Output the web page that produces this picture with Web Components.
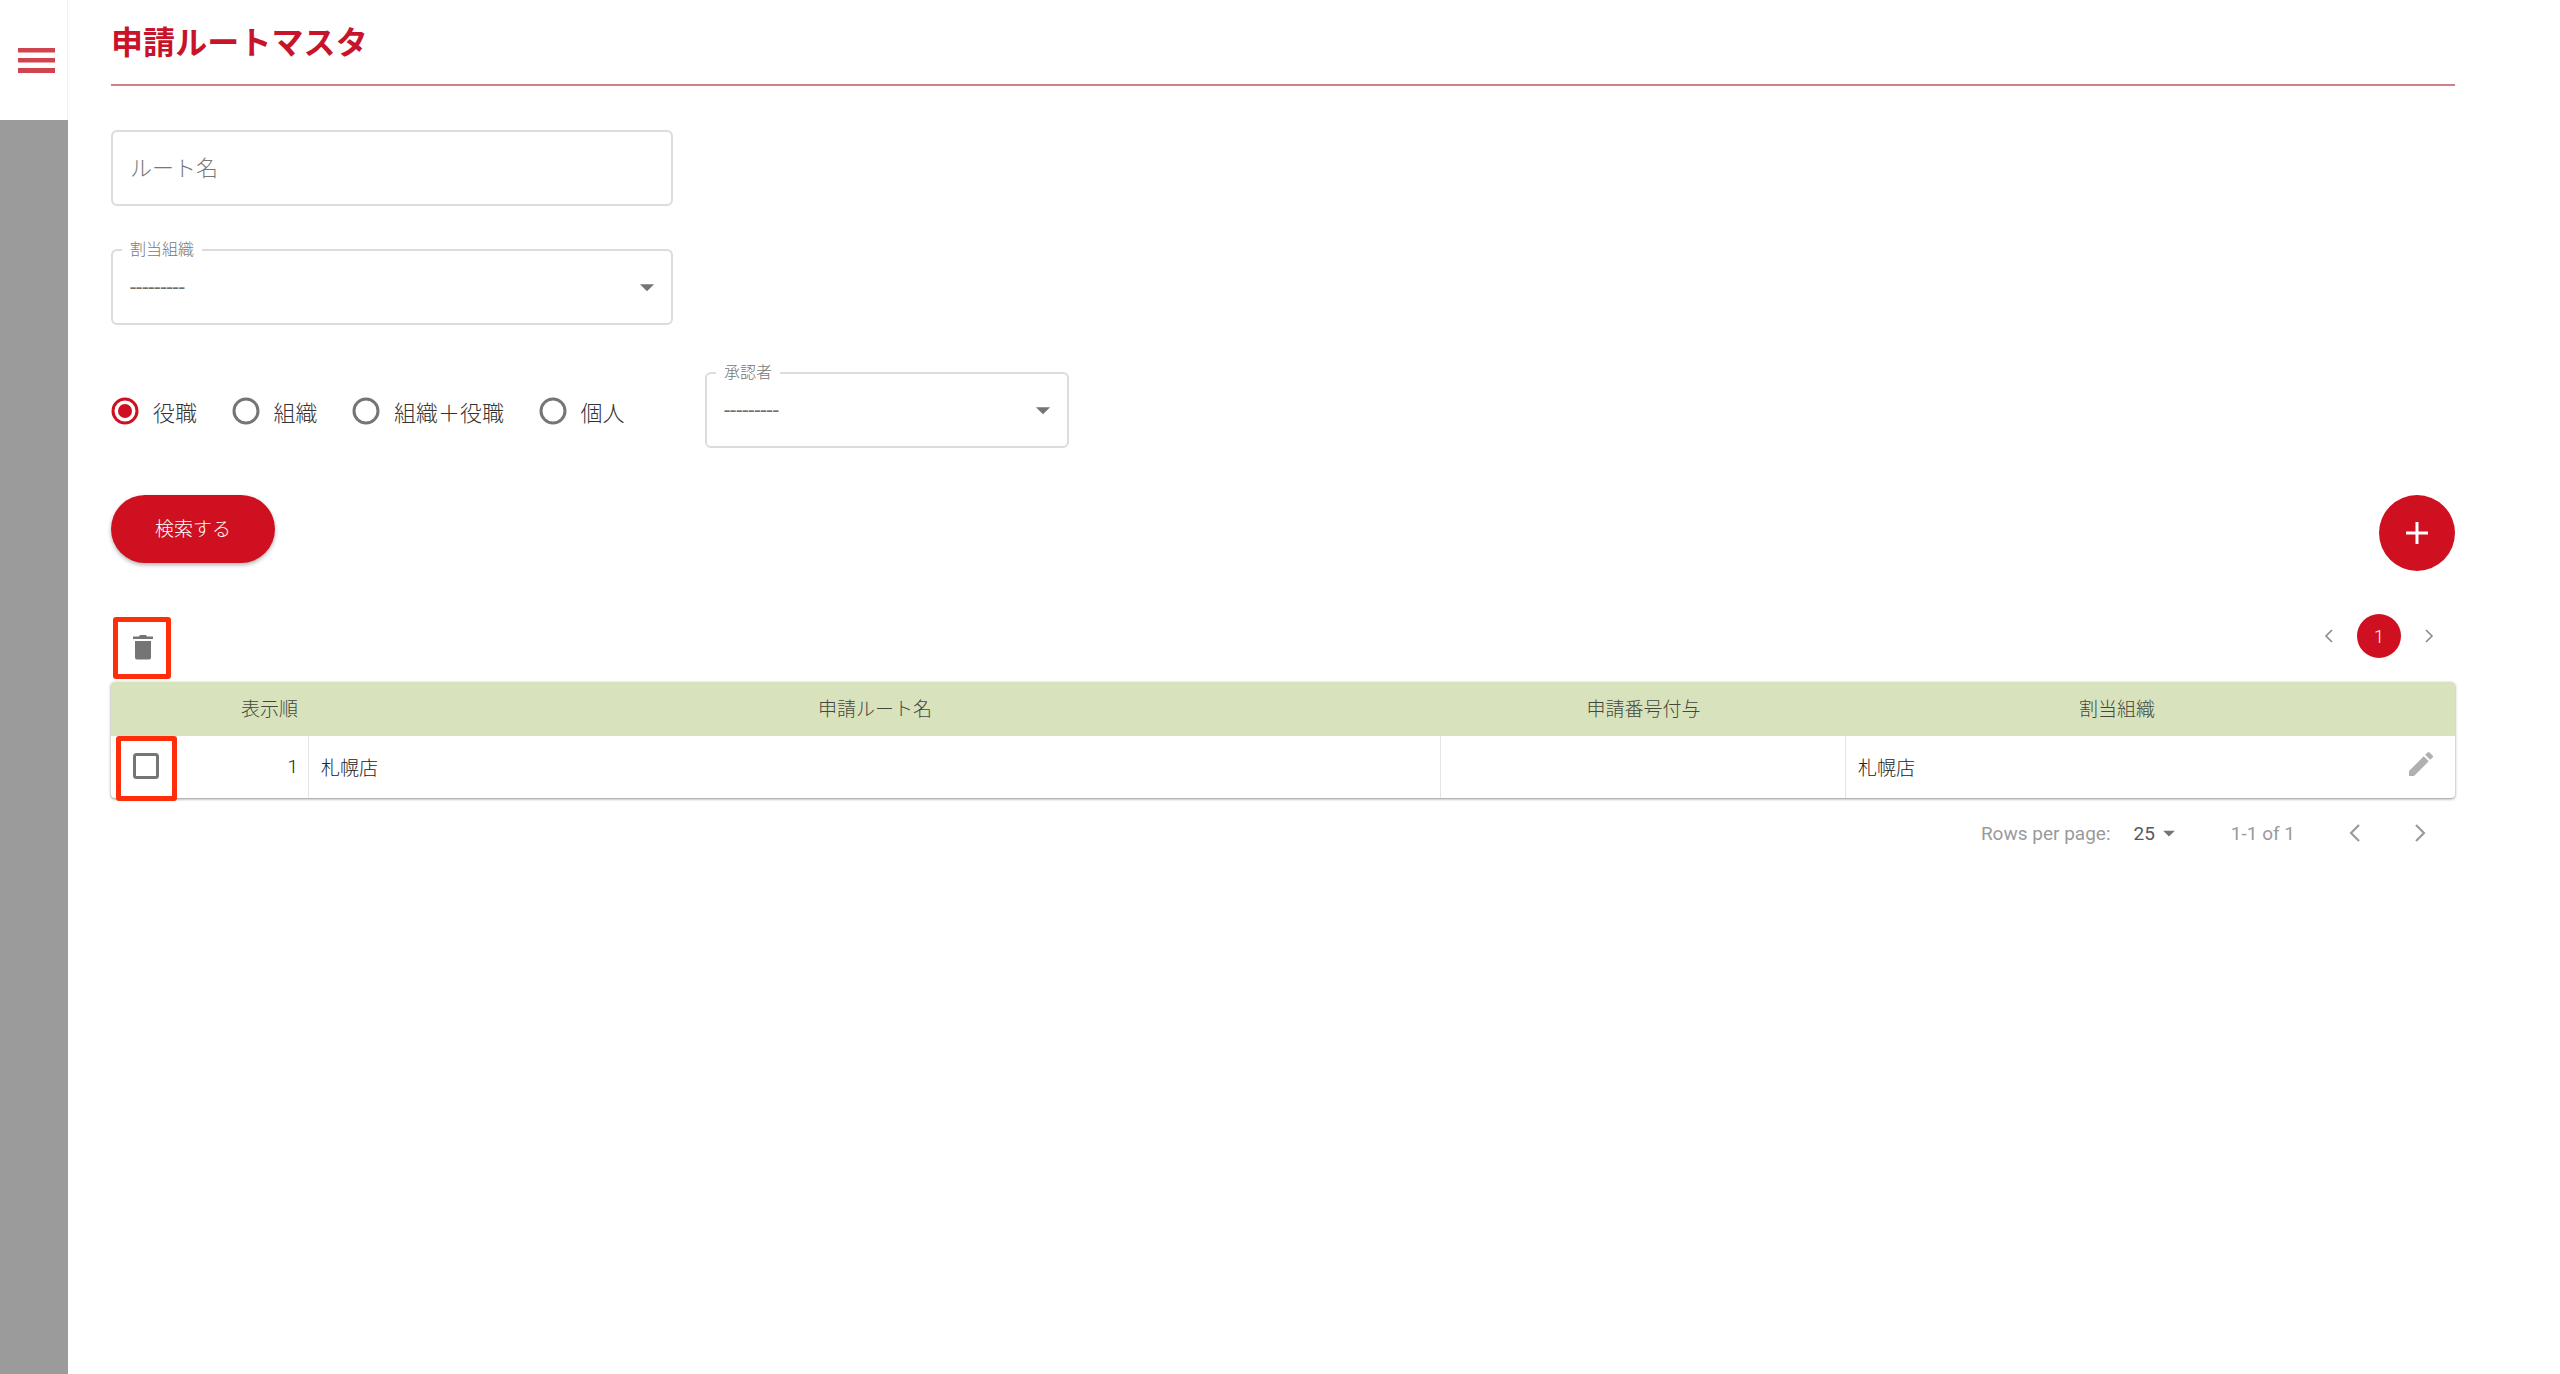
<!DOCTYPE html>
<html lang="ja">
<head>
<meta charset="utf-8">
<title>申請ルートマスタ</title>
<style>
  html, body { margin: 0; height: 100%; background: #fff; }
  body { font-family: Roboto, "Noto Sans CJK JP", sans-serif; }
</style>
</head>
<body>
<route-app></route-app>
<script>
const ARROW = `<svg width="34" height="34" viewBox="0 0 24 24" fill="#757575"><path d="M7 10l5 5 5-5z"/></svg>`;
const PREV = `<svg width="24" height="24" viewBox="0 0 24 24" fill="none" stroke="currentColor" stroke-width="1.6"><path d="M15 6l-6 6 6 6"/></svg>`;
const NEXT = `<svg width="24" height="24" viewBox="0 0 24 24" fill="none" stroke="currentColor" stroke-width="1.6"><path d="M9 6l6 6-6 6"/></svg>`;

class SideBar extends HTMLElement {
    constructor() {
        super();
        this.attachShadow({ mode: 'open' });
        this.shadowRoot.innerHTML = `
            <style>
                :host { display: flex; flex-direction: column; width: 68px; flex: none; background: #9b9b9b; }
                .top { height: 120px; background: #fff; border-right: 1px solid #f0f0f0; box-sizing: border-box; padding: 48px 0 0 18px; }
                svg { display: block; }
            </style>
            <div class="top">
                <svg width="37" height="25" viewBox="0 0 37 25" fill="#d0434f">
                    <rect x="0" y="0" width="37" height="4.5"/>
                    <rect x="0" y="10" width="37" height="4.5"/>
                    <rect x="0" y="20" width="37" height="5"/>
                </svg>
            </div>
        `;
    }
}

class PageTitle extends HTMLElement {
    constructor() {
        super();
        this.attachShadow({ mode: 'open' });
        this.shadowRoot.innerHTML = `
            <style>
                :host { display: block; height: 86px; box-sizing: border-box; border-bottom: 2px solid #cf8088; color: #c8142a; font-size: 32px; font-weight: 700; line-height: 44px; padding-top: 21px; letter-spacing: .1px; }
            </style>
            <slot></slot>
        `;
    }
}

class TextField extends HTMLElement {
    constructor() {
        super();
        this.attachShadow({ mode: 'open' });
        this.shadowRoot.innerHTML = `
            <style>
                :host { display: flex; align-items: center; box-sizing: border-box; width: 562px; height: 76px; border: 2px solid #dcdcdc; border-radius: 6px; padding: 0 17px 4px; color: #777; font-size: 22px; font-weight: 300; background: #fff; }
            </style>
            <slot></slot>
        `;
    }
}

class SelectField extends HTMLElement {
    constructor() {
        super();
        this.attachShadow({ mode: 'open' });
        const label = this.getAttribute('label');
        this.shadowRoot.innerHTML = `
            <style>
                :host { display: flex; position: relative; align-items: center; justify-content: space-between; box-sizing: border-box; width: var(--w, 562px); height: 76px; border: 2px solid #dcdcdc; border-radius: 6px; padding: 0 7px 0 17px; color: #6f6f6f; font-size: 22px; background: #fff; }
                .label { position: absolute; left: 9px; top: -12px; padding: 0 8px; height: 22px; line-height: 22px; background: #fff; font-size: 16px; font-weight: 300; color: #777; }
                svg { display: block; }
            </style>
            <span class="label">${label}</span>
            <span><slot></slot></span>
            ${ARROW}
        `;
    }
}

class RadioOption extends HTMLElement {
    constructor() {
        super();
        this.attachShadow({ mode: 'open' });
        const on = this.hasAttribute('checked');
        this.shadowRoot.innerHTML = `
            <style>
                :host { display: inline-flex; align-items: center; gap: 14px; font-size: 22px; font-weight: 300; color: #333; }
                svg { display: block; }
            </style>
            <svg width="28" height="28" viewBox="0 0 28 28">
                <circle cx="14" cy="14" r="12" fill="none" stroke="${on ? '#cf1020' : '#757575'}" stroke-width="3"/>
                ${on ? '<circle cx="14" cy="14" r="7" fill="#cf1020"/>' : ''}
            </svg>
            <span><slot></slot></span>
        `;
    }
}

class PillButton extends HTMLElement {
    constructor() {
        super();
        this.attachShadow({ mode: 'open' });
        this.shadowRoot.innerHTML = `
            <style>
                :host { display: inline-flex; align-items: center; justify-content: center; box-sizing: border-box; width: 164px; height: 68px; padding-bottom: 4px; border-radius: 34px; background: #cf1020; color: #fff; font-size: 19px; font-weight: 300; box-shadow: 0 2px 4px rgba(0,0,0,.3); }
            </style>
            <slot></slot>
        `;
    }
}

class AddFab extends HTMLElement {
    constructor() {
        super();
        this.attachShadow({ mode: 'open' });
        this.shadowRoot.innerHTML = `
            <style>
                :host { display: flex; align-items: center; justify-content: center; width: 76px; height: 76px; border-radius: 50%; background: #cf1020; }
                svg { display: block; }
            </style>
            <svg width="22" height="22" viewBox="0 0 22 22" fill="#fff">
                <rect x="9.5" y="0" width="3" height="22"/>
                <rect x="0" y="9.5" width="22" height="3"/>
            </svg>
        `;
    }
}

class TopPager extends HTMLElement {
    constructor() {
        super();
        this.attachShadow({ mode: 'open' });
        this.shadowRoot.innerHTML = `
            <style>
                :host { display: flex; align-items: center; gap: 16px; color: #8a8a8a; margin-right: 14px; }
                .page { width: 44px; height: 44px; border-radius: 50%; background: #cf1020; color: #fff; font-size: 18px; font-weight: 300; display: flex; align-items: center; justify-content: center; }
                svg { display: block; }
            </style>
            ${PREV}
            <div class="page">1</div>
            ${NEXT}
        `;
    }
}

class RouteTable extends HTMLElement {
    constructor() {
        super();
        this.attachShadow({ mode: 'open' });
        this.shadowRoot.innerHTML = `
            <style>
                :host { display: block; position: relative; font-size: 19px; font-weight: 300; color: #222; border-radius: 4px; box-shadow: 0 1px 3px rgba(0,0,0,.45); background: #fff; }
                .row { display: grid; grid-template-columns: 198px 1132px 405px 1fr; }
                .head { height: 54px; background: #d8e3bd; border-radius: 4px 4px 0 0; color: #44473c; }
                .head .cell { padding-bottom: 3px; }
                .body { height: 62px; }
                .body .cell { padding-bottom: 2px; }
                .cell { display: flex; align-items: center; box-sizing: border-box; padding: 0 12px; position: relative; }
                .center { justify-content: center; }
                .right { justify-content: flex-end; }
                .head .right { padding-right: 11px; }
                .head .org { padding-right: 79px; }
                .body .cell { border-right: 1px solid #e4e4e4; }
                .body .cell:last-child { border-right: 0; }
                .first { justify-content: space-between; padding-left: 22px; padding-right: 10px; }
                .edit { position: absolute; right: 18px; top: 12px; display: block; }
                .first svg { display: block; }
                .mark { position: absolute; box-sizing: border-box; border: 5px solid #ff2d0a; border-radius: 3px; left: 5px; top: 0; width: 61px; height: 65px; }
            </style>
            <div class="row head">
                <div class="cell right">表示順</div>
                <div class="cell center">申請ルート名</div>
                <div class="cell center">申請番号付与</div>
                <div class="cell center org">割当組織</div>
            </div>
            <div class="row body">
                <div class="cell first">
                    <svg width="26" height="26" viewBox="0 0 26 26"><rect x="1.5" y="1.5" width="23" height="23" rx="2" fill="none" stroke="#757575" stroke-width="3"/></svg>
                    <span>1</span>
                    <div class="mark"></div>
                </div>
                <div class="cell">札幌店</div>
                <div class="cell"></div>
                <div class="cell">札幌店
                    <svg class="edit" width="32" height="32" viewBox="0 0 24 24" fill="#b0b0b0"><path d="M3 17.25V21h3.75L17.81 9.94l-3.75-3.75L3 17.25zM20.71 7.04a1 1 0 0 0 0-1.41l-2.34-2.34a1 1 0 0 0-1.41 0l-1.83 1.83 3.75 3.75 1.83-1.83z"/></svg>
                </div>
            </div>
        `;
    }
}

class TableFooter extends HTMLElement {
    constructor() {
        super();
        this.attachShadow({ mode: 'open' });
        this.shadowRoot.innerHTML = `
            <style>
                :host { display: flex; align-items: center; justify-content: flex-end; height: 70px; font-size: 19px; color: #9a9a9a; padding-right: 19px; }
                .rows { margin-right: 23px; }
                .size { display: flex; align-items: center; color: #55585c; margin-right: 48px; }
                .size svg { width: 28px; height: 28px; }
                .count { margin-right: 44px; }
                .nav { display: flex; gap: 33px; color: #9a9a9a; }
                .nav svg { display: block; width: 32px; height: 32px; }
            </style>
            <span class="rows">Rows per page:</span>
            <span class="size">25${ARROW}</span>
            <span class="count">1-1 of 1</span>
            <div class="nav">${PREV}${NEXT}</div>
        `;
    }
}

class RouteApp extends HTMLElement {
    constructor() {
        super();
        this.attachShadow({ mode: 'open' });
        this.shadowRoot.innerHTML = `
            <style>
                :host { display: flex; height: 1374px; overflow: hidden; font-family: Roboto, "Noto Sans CJK JP", sans-serif; }
                main { flex: 1; padding: 0 105px 0 43px; min-width: 0; }
                text-field { margin-top: 44px; }
                select-field.org { margin-top: 43px; }
                .filters { display: flex; align-items: center; margin-top: 47px; height: 76px; }
                .radios { display: flex; gap: 34.5px; width: 594px; padding-top: 1px; }
                .actions { display: flex; justify-content: space-between; align-items: flex-start; margin-top: 47px; }
                .tools { display: flex; justify-content: space-between; margin-top: 46px; height: 65px; }
                .trash { box-sizing: border-box; width: 58px; height: 62px; margin-left: 2px; padding: 0 0 2px 1px; border: 5px solid #ff2d0a; border-radius: 3px; display: flex; align-items: center; justify-content: center; }
                .trash svg { display: block; }
                top-pager { height: 44px; margin-top: -3px; }
            </style>
            <side-bar></side-bar>
            <main>
                <page-title>申請ルートマスタ</page-title>
                <text-field>ルート名</text-field>
                <select-field class="org" label="割当組織">---------</select-field>
                <div class="filters">
                    <div class="radios">
                        <radio-option checked>役職</radio-option>
                        <radio-option>組織</radio-option>
                        <radio-option>組織＋役職</radio-option>
                        <radio-option>個人</radio-option>
                    </div>
                    <select-field label="承認者" style="--w: 364px">---------</select-field>
                </div>
                <div class="actions">
                    <pill-button>検索する</pill-button>
                    <add-fab></add-fab>
                </div>
                <div class="tools">
                    <div class="trash">
                        <svg width="20" height="26" viewBox="0 0 20 26" fill="#757575"><path d="M2 7h16v16.5a2 2 0 0 1-2 2H4a2 2 0 0 1-2-2zM0 2.5h6L7 1h6l1 1.5h6V5H0z"/></svg>
                    </div>
                    <top-pager></top-pager>
                </div>
                <route-table></route-table>
                <table-footer></table-footer>
            </main>
        `;
    }
}

customElements.define('side-bar', SideBar);
customElements.define('page-title', PageTitle);
customElements.define('text-field', TextField);
customElements.define('select-field', SelectField);
customElements.define('radio-option', RadioOption);
customElements.define('pill-button', PillButton);
customElements.define('add-fab', AddFab);
customElements.define('top-pager', TopPager);
customElements.define('route-table', RouteTable);
customElements.define('table-footer', TableFooter);
customElements.define('route-app', RouteApp);
</script>
</body>
</html>
